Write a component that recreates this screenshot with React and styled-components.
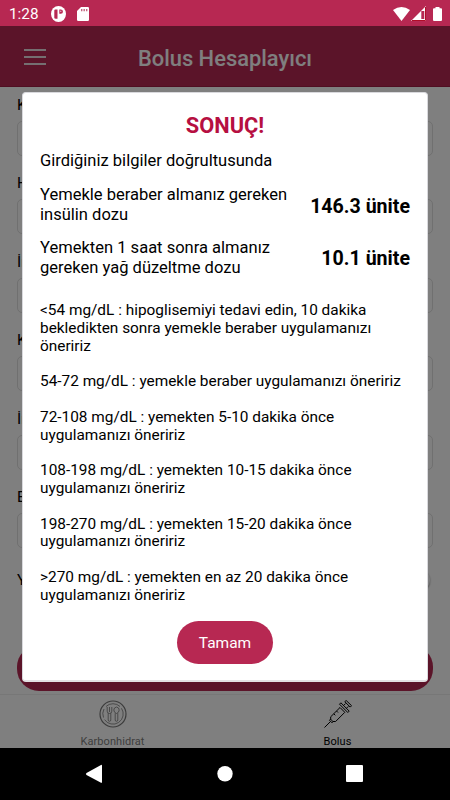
import React from "react";
import styled, { createGlobalStyle } from "styled-components";

const GlobalStyle = createGlobalStyle`
    * {
        box-sizing: border-box;
    }
    body {
        margin: 0;
        font-family: Roboto, sans-serif;
        color: #000000;
    }
`

const Screen = styled.div`
    position: relative;
    display: flex;
    flex-direction: column;
    width: 450px;
    height: 800px;
    overflow: hidden;
    background-color: #ffffff;
`

const StatusBar = styled.div`
    display: flex;
    align-items: center;
    flex: none;
    height: 26px;
    padding: 1px 8px 0 9px;
    background-color: #b72852;
    color: #ffffff;
`

const Clock = styled.span`
    width: 42px;
    font-size: 15.3px;
    line-height: 18px;
`

const StatusIcon = styled.svg`
    display: block;
    flex: none;
    width: ${(props) => props.$width}px;
    height: ${(props) => props.$height}px;
    margin-left: ${(props) => props.$left || 0}px;
`

const Spacer = styled.div`
    flex: 1;
`

const Header = styled.header`
    display: grid;
    grid-template-columns: 48px 1fr 48px;
    align-items: center;
    flex: none;
    height: 61px;
    padding: 2px 24px 0;
    background-color: #b72852;
    border-bottom: 1px solid #a01c44;
`

const MenuButton = styled.button`
    display: flex;
    flex-direction: column;
    justify-content: space-between;
    width: 22px;
    height: 16px;
    padding: 0;
    border: none;
    background: none;
`

const MenuLine = styled.span`
    height: 2px;
    background-color: #eadfe3;
`

const HeaderTitle = styled.h1`
    margin: 3px 0 0;
    font-size: 21.9px;
    font-weight: 500;
    line-height: 26px;
    text-align: center;
    color: #ffffff;
`

const Form = styled.main`
    display: flex;
    flex-direction: column;
    flex: 1;
    min-height: 0;
    padding: 8px 17px 3px;
`

const Field = styled.label`
    display: flex;
    flex-direction: column;
    flex: none;
    height: 78.4px;
    font-size: 15.3px;
    line-height: 20px;
`

const Input = styled.input`
    width: 100%;
    height: 35px;
    margin-top: 6px;
    border: 1px solid #e0e0e0;
    border-radius: 5px;
    background: none;
`

const SwitchRow = styled.div`
    display: flex;
    justify-content: space-between;
    align-items: center;
    height: 22px;
    margin-top: 4px;
    padding-right: 3px;
    font-size: 15.3px;
`

const Knob = styled.span`
    width: 22px;
    height: 22px;
    border-radius: 50%;
    background-color: #f8f8f8;
    box-shadow: 0 1px 2px #999999;
`

const SubmitButton = styled.button`
    height: 46px;
    margin-top: auto;
    border: none;
    border-radius: 22px;
    background-color: #b72852;
`

const TabBar = styled.nav`
    display: grid;
    grid-template-columns: 1fr 1fr;
    flex: none;
    height: 54px;
    border-top: 1px solid #efefef;
`

const Tab = styled.div`
    display: flex;
    flex-direction: column;
    align-items: center;
    padding-top: 5px;
    font-size: 11px;
    line-height: 14px;
    letter-spacing: 0.05px;
    color: ${(props) => (props.$active ? "#000000" : "#7c7c7c")};
    svg {
        display: block;
        width: 28px;
        height: 28px;
        margin-bottom: 7px;
    }
`

const NavBar = styled.div`
    flex: none;
    height: 52px;
    padding-top: 12px;
    background-color: #000000;
    svg {
        display: block;
        width: 450px;
        height: 28px;
    }
`

const Backdrop = styled.div`
    position: absolute;
    top: 26px;
    left: 0;
    width: 450px;
    height: 722px;
    padding: 66px 22px 0;
    background-color: rgba(0, 0, 0, 0.5);
`

const Modal = styled.section`
    display: flex;
    flex-direction: column;
    height: 590px;
    padding: 20px 17px 0;
    border: 1px solid #d9d9dd;
    border-bottom: 2px solid #e3e1e3;
    border-radius: 4px;
    background-color: #ffffff;
`

const ModalTitle = styled.h2`
    margin: 0;
    font-size: 21.8px;
    font-weight: 700;
    line-height: 26px;
    text-align: center;
    color: #b60f41;
`

const Intro = styled.p`
    margin: 12px 0 14px;
    font-size: 16.55px;
    line-height: 20px;
`

const Dose = styled.div`
    display: flex;
    justify-content: space-between;
    align-items: center;
    height: 40px;
    margin-bottom: 12.5px;
    font-size: 16.55px;
    line-height: 19.7px;
    white-space: nowrap;
`

const DoseValue = styled.strong`
    padding-top: 3px;
    font-size: 19.6px;
    font-weight: 700;
`

const AdviceList = styled.div`
    display: flex;
    flex-direction: column;
    gap: 17.8px;
    margin-top: 12px;
`

const Advice = styled.p`
    margin: 0;
    font-size: 15.38px;
    line-height: 17.8px;
    white-space: pre-line;
`

const OkButton = styled.button`
    align-self: center;
    width: 96px;
    height: 43px;
    margin-top: 16px;
    padding: 2px 0 0;
    border: none;
    border-radius: 22px;
    background-color: #b72852;
    font-family: Roboto, sans-serif;
    font-size: 15.5px;
    color: #ffffff;
`

const PlateIcon = () => (
    <svg viewBox="0 0 28 28" fill="none" stroke="#777777" strokeWidth="0.8">
        <circle cx="14" cy="14" r="13" strokeWidth="1.2" />
        <path d="M7 6.500a10.200 10.200 0 0 1 14 0M22.500 8.300a10.200 10.200 0 0 1-17 11.300M4.500 17.500A10.200 10.200 0 0 1 5 9" />
        <path d="M8.200 7v4.200q0 2.300 2.300 2.300t2.300-2.300V7M10.500 7v5M9.200 13.200v6.800q0 1.300 1.300 1.300t1.300-1.300v-6.800" />
        <path d="M17.500 7q-2.700.5-2.700 3t2.700 3.500q2.700-1 2.700-3.500t-2.700-3ZM16.200 13.200v6.800q0 1.300 1.300 1.300t1.300-1.300v-6.800" />
    </svg>
)

const SyringeIcon = () => (
    <svg viewBox="0 0 28 28" fill="none" stroke="#000000" strokeWidth="1">
        <path d="M.5 27.500 6.500 21.500" />
        <path d="M5.500 20.300l2.500 2.500 1-1.200-2.500-2.500Z" />
        <path d="M6.700 19.500v-2.700L16 7.500l4.800 4.800-9.200 9.200H8.700" />
        <path d="M15.500 4.200l8.300 8.300 1.400-1.400-8.300-8.300Z" />
        <path d="M19.600 5.500l2-2M22.400 8.300l2-2" />
        <path d="M20.800 1.700l5.400 5.400 1.400-1.400L22.200.5Z" />
        <path d="M12.500 11l1.500 1.500M9.800 13.800l1.500 1.500" />
    </svg>
)

const fields = ["K", "H", "İn", "K", "İn", "B"]

const advices = [
    "<54 mg/dL : hipoglisemiyi tedavi edin, 10 dakika\nbekledikten sonra yemekle beraber uygulamanızı\nöneririz",
    "54-72 mg/dL : yemekle beraber uygulamanızı öneririz",
    "72-108 mg/dL : yemekten 5-10 dakika önce\nuygulamanızı öneririz",
    "108-198 mg/dL : yemekten 10-15 dakika önce\nuygulamanızı öneririz",
    "198-270 mg/dL : yemekten 15-20 dakika önce\nuygulamanızı öneririz",
    ">270 mg/dL : yemekten en az 20 dakika önce\nuygulamanızı öneririz",
]

const App = () => {
    return (
        <Screen>
            <GlobalStyle />
            <StatusBar>
                <Clock>1:28</Clock>
                <StatusIcon $width={15} $height={16} viewBox="0 0 15 16">
                    <ellipse cx="7.5" cy="8" rx="7.5" ry="8" fill="#ffffff" />
                    <path d="M6.500 3.500H4.300q-1 0-1 1v7.200q0 1 1.500 1h1.700ZM8.300 3.500v4.300h1.500a2 2 0 0 0 0-4.300Z" fill="#b72852" />
                    <path d="M9.300 4.700h1v1h-1z" fill="#ffffff" />
                </StatusIcon>
                <StatusIcon $width={12} $height={14} $left={11} viewBox="0 0 12 14">
                    <path d="M4 0h6.800Q12 0 12 1.200v11.600q0 1.200-1.200 1.200H1.200Q0 14 0 12.800V4Z" fill="#ffffff" />
                    <path d="M4.700 2v2.200M7.200 2v2.200M9.700 2v2.200" stroke="#c4637f" strokeWidth="1.4" />
                </StatusIcon>
                <Spacer />
                <StatusIcon $width={17} $height={14} viewBox="0 0 17 14">
                    <path d="M0 3Q8.500-3 17 3L8.500 14Z" fill="#ffffff" />
                </StatusIcon>
                <StatusIcon $width={15} $height={15} $left={1} viewBox="0 0 15 15">
                    <path d="M0 15 15 0v15Z" fill="#ffffff" />
                    <path d="M10.300 5h3v8h-3Z" fill="#b72852" />
                    <path d="M14.500 1v13.500H1" fill="none" stroke="#b00d28" strokeWidth="1" />
                </StatusIcon>
                <StatusIcon $width={9} $height={14} $left={7} viewBox="0 0 9 14">
                    <path d="M2.500 0h4v1.300H8q1 0 1 1v10.500Q9 14 8 14H1q-1 0-1-1.200V2.300q0-1 1-1h1.500Z" fill="#ffffff" />
                </StatusIcon>
            </StatusBar>
            <Header>
                <MenuButton>
                    <MenuLine />
                    <MenuLine />
                    <MenuLine />
                </MenuButton>
                <HeaderTitle>Bolus Hesaplayıcı</HeaderTitle>
            </Header>
            <Form>
                {fields.map((label, i) => (
                    <Field key={i}>
                        {label}
                        <Input />
                    </Field>
                ))}
                <SwitchRow>
                    Y
                    <Knob />
                </SwitchRow>
                <SubmitButton />
            </Form>
            <TabBar>
                <Tab>
                    <PlateIcon />
                    Karbonhidrat
                </Tab>
                <Tab $active>
                    <SyringeIcon />
                    Bolus
                </Tab>
            </TabBar>
            <NavBar>
                <svg viewBox="0 0 450 28" fill="#ffffff">
                    <path d="M86.500 13 101 5q1-.5 1 .5v16.700q0 1-1 .5L86.500 15q-1.200-1 0-2Z" />
                    <circle cx="225" cy="13.700" r="7.700" />
                    <rect x="346" y="5" width="17" height="17" rx="1" />
                </svg>
            </NavBar>
            <Backdrop>
                <Modal>
                    <ModalTitle>SONUÇ!</ModalTitle>
                    <Intro>Girdiğiniz bilgiler doğrultusunda</Intro>
                    <Dose>
                        <span>Yemekle beraber almanız gereken<br />insülin dozu</span>
                        <DoseValue>146.3 ünite</DoseValue>
                    </Dose>
                    <Dose>
                        <span>Yemekten 1 saat sonra almanız<br />gereken yağ düzeltme dozu</span>
                        <DoseValue>10.1 ünite</DoseValue>
                    </Dose>
                    <AdviceList>
                        {advices.map((advice) => (
                            <Advice key={advice}>{advice}</Advice>
                        ))}
                    </AdviceList>
                    <OkButton>Tamam</OkButton>
                </Modal>
            </Backdrop>
        </Screen>
    );
}

export default App;
